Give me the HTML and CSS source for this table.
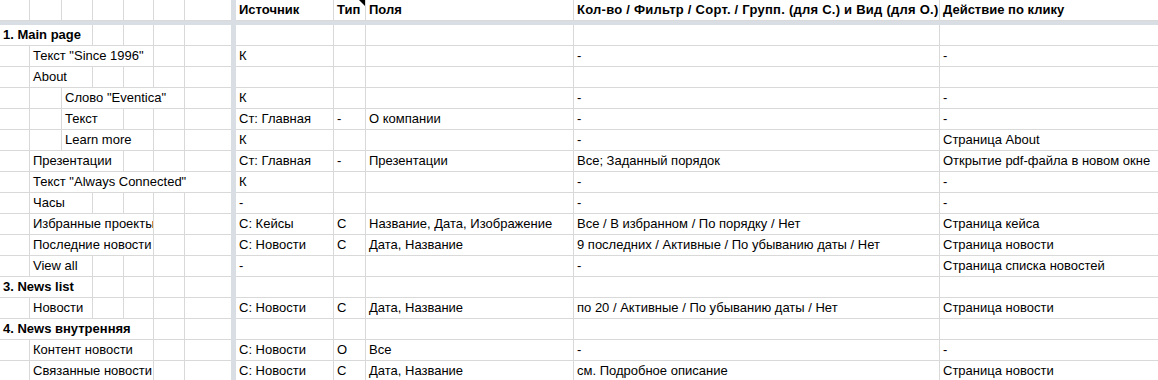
FILE: index.html
```html
<!DOCTYPE html>
<html lang="ru">
<head>
<meta charset="utf-8">
<title>Sheet</title>
<link rel="stylesheet" href="styles.css">
</head>
<body>
<div class="sheet">
  <div class="divider"></div>
  <div class="band"></div>

  <!-- header -->
  <div class="c h"></div><div class="c h"></div><div class="c h"></div><div class="c h"></div><div class="c h"></div><div class="c h"></div><div class="c h nr"></div>
  <div class="c h b">Источник</div><div class="c h b note">Тип</div><div class="c h b">Поля</div><div class="c h b wide">Кол-во / Фильтр / Сорт. / Групп. (для С.) и Вид (для О.)</div><div class="c h b last">Действие по клику</div>

  <!-- 1 -->
  <div class="c s3 b">1. Main page</div><div class="c"></div><div class="c"></div><div class="c"></div><div class="c nr"></div>
  <div class="c"></div><div class="c"></div><div class="c"></div><div class="c"></div><div class="c last"></div>
  <!-- 2 -->
  <div class="c"></div><div class="c s4">Текст "Since 1996"</div><div class="c"></div><div class="c nr"></div>
  <div class="c">К</div><div class="c"></div><div class="c"></div><div class="c">-</div><div class="c last">-</div>
  <!-- 3 -->
  <div class="c"></div><div class="c s2">About</div><div class="c"></div><div class="c"></div><div class="c"></div><div class="c nr"></div>
  <div class="c"></div><div class="c"></div><div class="c"></div><div class="c"></div><div class="c last"></div>
  <!-- 4 -->
  <div class="c"></div><div class="c"></div><div class="c s4">Слово "Eventica"</div><div class="c nr"></div>
  <div class="c">К</div><div class="c"></div><div class="c"></div><div class="c">-</div><div class="c last">-</div>
  <!-- 5 -->
  <div class="c"></div><div class="c"></div><div class="c s2">Текст</div><div class="c"></div><div class="c"></div><div class="c nr"></div>
  <div class="c">Ст: Главная</div><div class="c">-</div><div class="c">О компании</div><div class="c">-</div><div class="c last">-</div>
  <!-- 6 -->
  <div class="c"></div><div class="c"></div><div class="c s3">Learn more</div><div class="c"></div><div class="c nr"></div>
  <div class="c">К</div><div class="c"></div><div class="c"></div><div class="c">-</div><div class="c last">Страница About</div>
  <!-- 7 -->
  <div class="c"></div><div class="c s3">Презентации</div><div class="c"></div><div class="c"></div><div class="c nr"></div>
  <div class="c">Ст: Главная</div><div class="c">-</div><div class="c">Презентации</div><div class="c">Все; Заданный порядок</div><div class="c last">Открытие pdf-файла в новом окне</div>
  <!-- 8 -->
  <div class="c"></div><div class="c s6 nr">Текст "Always Connected"</div>
  <div class="c">К</div><div class="c"></div><div class="c"></div><div class="c">-</div><div class="c last">-</div>
  <!-- 9 -->
  <div class="c"></div><div class="c s2">Часы</div><div class="c"></div><div class="c"></div><div class="c"></div><div class="c nr"></div>
  <div class="c">-</div><div class="c"></div><div class="c"></div><div class="c">-</div><div class="c last">-</div>
  <!-- 10 -->
  <div class="c"></div><div class="c s4">Избранные проекты</div><div class="c"></div><div class="c nr"></div>
  <div class="c">С: Кейсы</div><div class="c">С</div><div class="c">Название, Дата, Изображение</div><div class="c">Все / В избранном / По порядку / Нет</div><div class="c last">Страница кейса</div>
  <!-- 11 -->
  <div class="c"></div><div class="c s4">Последние новости</div><div class="c"></div><div class="c nr"></div>
  <div class="c">С: Новости</div><div class="c">С</div><div class="c">Дата, Название</div><div class="c">9 последних / Активные / По убыванию даты / Нет</div><div class="c last">Страница новости</div>
  <!-- 12 -->
  <div class="c"></div><div class="c s2">View all</div><div class="c"></div><div class="c"></div><div class="c"></div><div class="c nr"></div>
  <div class="c">-</div><div class="c"></div><div class="c"></div><div class="c">-</div><div class="c last">Страница списка новостей</div>
  <!-- 13 -->
  <div class="c s3 b">3. News list</div><div class="c"></div><div class="c"></div><div class="c"></div><div class="c nr"></div>
  <div class="c"></div><div class="c"></div><div class="c"></div><div class="c"></div><div class="c last"></div>
  <!-- 14 -->
  <div class="c"></div><div class="c s2">Новости</div><div class="c"></div><div class="c"></div><div class="c"></div><div class="c nr"></div>
  <div class="c">С: Новости</div><div class="c">С</div><div class="c">Дата, Название</div><div class="c">по 20 / Активные / По убыванию даты / Нет</div><div class="c last">Страница новости</div>
  <!-- 15 -->
  <div class="c s5 b">4. News внутренняя</div><div class="c"></div><div class="c nr"></div>
  <div class="c"></div><div class="c"></div><div class="c"></div><div class="c"></div><div class="c last"></div>
  <!-- 16 -->
  <div class="c"></div><div class="c s4">Контент новости</div><div class="c"></div><div class="c nr"></div>
  <div class="c">С: Новости</div><div class="c">О</div><div class="c">Все</div><div class="c">-</div><div class="c last">-</div>
  <!-- 17 -->
  <div class="c"></div><div class="c s4">Связанные новости</div><div class="c"></div><div class="c nr"></div>
  <div class="c">С: Новости</div><div class="c">С</div><div class="c">Дата, Название</div><div class="c">см. Подробное описание</div><div class="c last">Страница новости</div>
</div>
</body>
</html>
```

FILE: styles.css
```css
html, body {
  margin: 0;
  padding: 0;
  background: #fff;
  overflow: hidden;
}

.sheet {
  display: grid;
  width: 1158px;
  grid-template-columns: 30px 32px 31px 31px 30px 31px 46px 5px 98px 32px 208px 366px 218px;
  grid-template-rows: 21px 4px repeat(17, 21px);
  font-family: "Liberation Sans", Arial, sans-serif;
  font-size: 13px;
  color: #000;
}

.divider {
  grid-column: 8;
  grid-row: 1 / -1;
  background: #d9dde4;
}

.band {
  grid-column: 1 / -1;
  grid-row: 2;
  background: #d9dde4;
}

.c {
  box-sizing: border-box;
  border-right: 1px solid #d9d9d9;
  border-bottom: 1px solid #d9d9d9;
  padding-left: 3px;
  line-height: 20px;
  white-space: nowrap;
  overflow: hidden;
}

.h { position: relative; }
.b { font-weight: bold; }
.wide { letter-spacing: 0.25px; }
.nr { border-right: none; }
.last { border-right: none; }

.s2 { grid-column: span 2; }
.s3 { grid-column: span 3; }
.s4 { grid-column: span 4; }
.s5 { grid-column: span 5; }
.s6 { grid-column: span 6; }

.note::after {
  content: "";
  position: absolute;
  top: 0;
  right: 0;
  width: 0;
  height: 0;
  border-top: 6px solid #000;
  border-left: 6px solid transparent;
}
```
